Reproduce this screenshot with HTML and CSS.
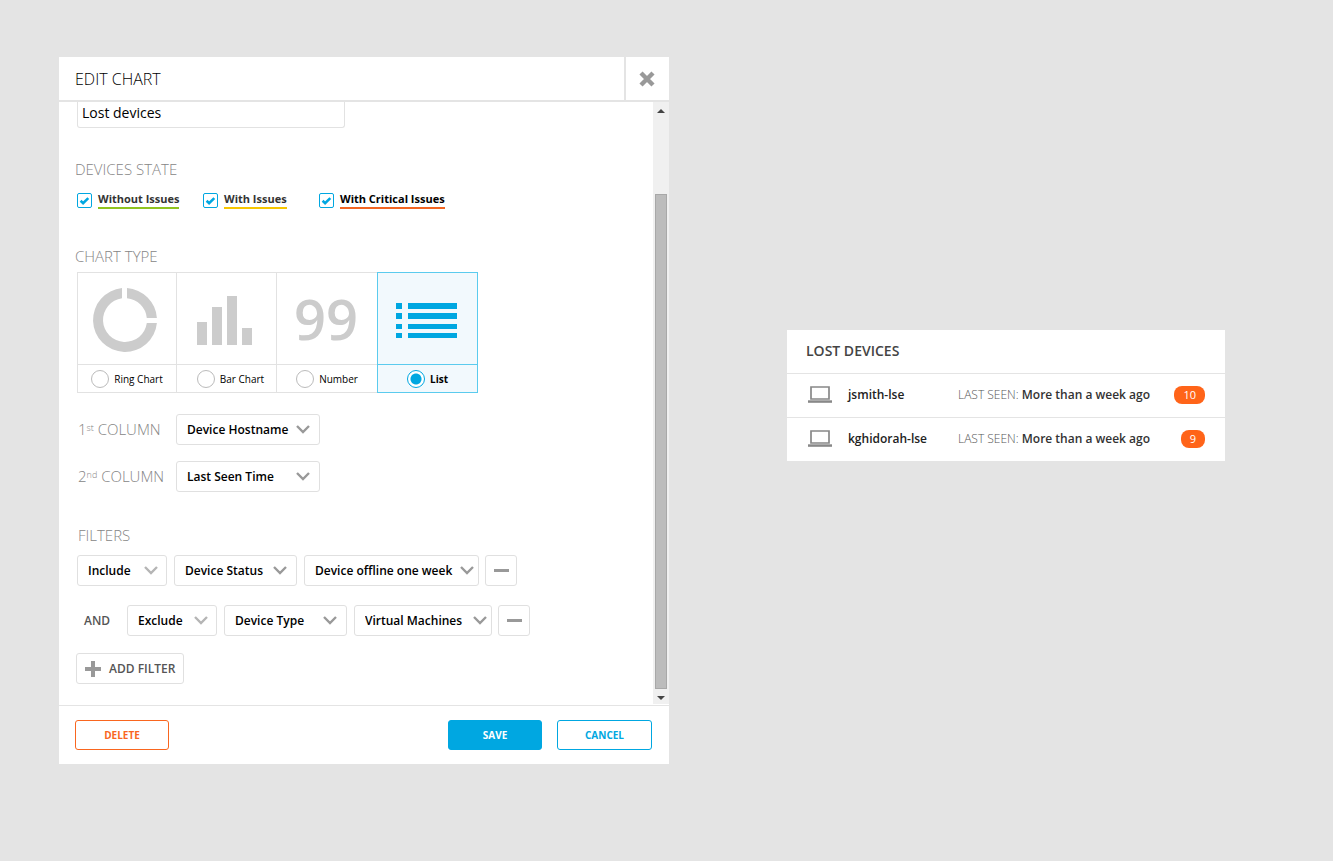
FILE: index.html
```html
<!DOCTYPE html>
<html lang="en">
<head>
<meta charset="utf-8">
<title>Edit Chart</title>
<meta name="viewport" content="width=device-width, initial-scale=1">
<link rel="stylesheet" href="styles.css">
</head>
<body>
<svg class="defs" aria-hidden="true">
  <symbol id="chevron" viewBox="0 0 14 9"><path d="M1 1l6 6 6-6" fill="none" stroke="currentColor" stroke-width="2.4"/></symbol>
  <symbol id="check" viewBox="0 0 15 15"><path d="M3.600 7.800l2.500 2.300 5.200-5" fill="none" stroke="currentColor" stroke-width="2.600"/></symbol>
  <symbol id="minus" viewBox="0 0 15 3"><path d="M0 0h15v3H0z" fill="currentColor"/></symbol>
  <symbol id="laptop" viewBox="0 0 24 17"><path d="M3 1h18v12H3z" fill="none" stroke="currentColor" stroke-width="1.700"/><path d="M0 14.300h24v2.500H0z" fill="currentColor"/></symbol>
</svg>
<main class="page">
  <section class="dialog" role="dialog" aria-labelledby="dialog-title">
    <header class="dialog-header">
      <h1 class="dialog-title" id="dialog-title">EDIT CHART</h1>
      <button class="close" type="button" aria-label="Close">
        <svg width="16" height="16" viewBox="0 0 16 16"><path d="M2 2l12 12M14 2L2 14" stroke="currentColor" stroke-width="4.400"/></svg>
      </button>
    </header>
    <div class="dialog-body">
      <form class="form" id="chart-form">
        <input class="name-input" type="text" value="Lost devices" aria-label="Chart name">

        <h2 class="section-title title-state">DEVICES STATE</h2>
        <div class="states">
          <label class="state"><span class="check"><input type="checkbox" checked><svg><use href="#check"/></svg></span><span class="state-name ok">Without Issues</span></label>
          <label class="state"><span class="check"><input type="checkbox" checked><svg><use href="#check"/></svg></span><span class="state-name warn">With Issues</span></label>
          <label class="state"><span class="check"><input type="checkbox" checked><svg><use href="#check"/></svg></span><span class="state-name critical">With Critical Issues</span></label>
        </div>

        <h2 class="section-title title-type">CHART TYPE</h2>
        <div class="tiles">
          <label class="tile tile-ring">
            <span class="tile-art"><svg width="66" height="66" viewBox="0 0 66 66">
              <path d="M30 1.100A32 32 0 1 0 64.900 36H54.800A22 22 0 1 1 30 11.200zM35 1.100V11.200A22 22 0 0 1 54.800 31H64.900A32 32 0 0 0 35 1.100z" fill="currentColor"/></svg></span>
            <span class="tile-choice"><input type="radio" name="type">Ring Chart</span>
          </label>
          <label class="tile tile-bars">
            <span class="tile-art"><svg width="55" height="50" viewBox="0 0 55 50"><path d="M0 27h10v23H0zM15 12h10v38H15zM30 1h10v49H30zM45 33h10v17H45z" fill="currentColor"/></svg></span>
            <span class="tile-choice"><input type="radio" name="type">Bar Chart</span>
          </label>
          <label class="tile tile-number">
            <span class="tile-art">99</span>
            <span class="tile-choice"><input type="radio" name="type">Number</span>
          </label>
          <label class="tile selected">
            <span class="tile-art"><svg width="61" height="35" viewBox="0 0 61 35"><path d="M0 0h6v6H0zM12 0h49v6H12zM0 10h6v6H0zM12 10h49v6H12zM0 21h6v5H0zM12 21h49v5H12zM0 30h6v5H0zM12 30h49v5H12z" fill="currentColor"/></svg></span>
            <span class="tile-choice"><input type="radio" name="type" checked>List</span>
          </label>
        </div>

        <div class="columns">
          <label class="column-label" for="col1">1<sup>st</sup> COLUMN</label>
          <span class="select w-144"><select id="col1"><option>Device Hostname</option></select><svg><use href="#chevron"/></svg></span>
          <label class="column-label" for="col2">2<sup>nd</sup> COLUMN</label>
          <span class="select w-144"><select id="col2"><option>Last Seen Time</option></select><svg><use href="#chevron"/></svg></span>
        </div>

        <h2 class="section-title title-filters">FILTERS</h2>
        <div class="filter">
          <span class="select w-90 pale"><select aria-label="Filter 1 mode"><option>Include</option></select><svg><use href="#chevron"/></svg></span>
          <span class="select w-123"><select aria-label="Filter 1 field"><option>Device Status</option></select><svg><use href="#chevron"/></svg></span>
          <span class="select w-175 tight"><select aria-label="Filter 1 value"><option>Device offline one week</option></select><svg><use href="#chevron"/></svg></span>
          <button class="remove" type="button" aria-label="Remove filter 1"><svg><use href="#minus"/></svg></button>
        </div>
        <div class="filter">
          <span class="joiner">AND</span>
          <span class="select w-90 pale"><select aria-label="Filter 2 mode"><option>Exclude</option></select><svg><use href="#chevron"/></svg></span>
          <span class="select w-123"><select aria-label="Filter 2 field"><option>Device Type</option></select><svg><use href="#chevron"/></svg></span>
          <span class="select w-138 tight"><select aria-label="Filter 2 value"><option>Virtual Machines</option></select><svg><use href="#chevron"/></svg></span>
          <button class="remove" type="button" aria-label="Remove filter 2"><svg><use href="#minus"/></svg></button>
        </div>
        <button class="add" type="button"><svg width="16" height="16" viewBox="0 0 16 16"><path d="M6 0h4v6h6v4h-6v6H6v-6H0V6h6z" fill="currentColor"/></svg>ADD FILTER</button>
      </form>
      <div class="scrollbar" aria-hidden="true">
        <svg width="8" height="4" viewBox="0 0 8 4"><path d="M4 0l4 4H0z" fill="currentColor"/></svg>
        <div class="track"><div class="thumb"></div></div>
        <svg width="8" height="4" viewBox="0 0 8 4"><path d="M4 4l4-4H0z" fill="currentColor"/></svg>
      </div>
    </div>
    <footer class="dialog-footer">
      <button class="btn btn-delete" type="button">DELETE</button>
      <button class="btn btn-save" type="submit" form="chart-form">SAVE</button>
      <button class="btn btn-cancel" type="button">CANCEL</button>
    </footer>
  </section>

  <section class="card" aria-labelledby="card-title">
    <h2 class="card-title" id="card-title">LOST DEVICES</h2>
    <ul class="devices">
      <li class="device"><svg><use href="#laptop"/></svg><span class="device-name">jsmith-lse</span><span class="seen">LAST SEEN: <strong>More than a week ago</strong></span><span class="badge">10</span></li>
      <li class="device"><svg><use href="#laptop"/></svg><span class="device-name">kghidorah-lse</span><span class="seen">LAST SEEN: <strong>More than a week ago</strong></span><span class="badge">9</span></li>
    </ul>
  </section>
</main>
</body>
</html>
```
FILE: styles.css
```css
* { box-sizing: border-box; }

body {
  margin: 0;
  background: #e4e4e4;
  color: #000;
  font-family: "Open Sans", "Noto Sans", sans-serif;
  font-size: 12px;
}

button, input, select { font: inherit; color: inherit; margin: 0; }
button { cursor: pointer; }
svg { display: block; flex: none; }
.defs { position: absolute; width: 0; height: 0; }

.page {
  display: grid;
  grid-template-columns: 610fr 438fr;
  gap: 118px;
  align-items: start;
  padding: 57px 108px 57px 59px;
}

/* Dialog */
.dialog { background: #fff; }

.dialog-header {
  display: flex;
  align-items: stretch;
  height: 45px;
  border-bottom: 2px solid #e4e4e4;
}
.dialog-title {
  flex: 1;
  margin: 0;
  padding-left: 16px;
  font-size: 16px;
  font-weight: 300;
  line-height: 44px;
}
.close {
  display: grid;
  place-items: center;
  width: 45px;
  padding: 0 1px 0 0;
  border: 0;
  border-left: 2px solid #e4e4e4;
  background: none;
  color: #999;
}

.dialog-body { display: flex; border-bottom: 1px solid #e4e4e4; }
.form { flex: 1; min-width: 0; padding: 0 0 21px 18px; }

.name-input {
  display: block;
  width: 268px;
  height: 26px;
  padding: 0 4px 4px;
  border: 1px solid #e2e2e2;
  border-top: 0;
  border-radius: 0 0 3px 3px;
  font-size: 14px;
}

.section-title {
  margin: 0;
  color: #858585;
  font-size: 15px;
  font-weight: 300;
  line-height: 20px;
}
.title-state { margin: 31px 0 12px -2px; }
.title-type { margin: 37px 0 6px -2px; }
.title-filters { margin: 33px 0 10px 1px; }

.states { display: grid; grid-template-columns: 126px 116px auto; justify-content: start; }
.state { display: flex; align-items: center; gap: 6px; }
.check { display: grid; color: #00a7e1; }
.check > * { grid-area: 1 / 1; width: 15px; height: 15px; }
.check input { appearance: none; border: 1px solid #00a7e1; border-radius: 2px; background: #fff; }
.check svg { pointer-events: none; }
.check input:not(:checked) + svg { visibility: hidden; }
.state-name { border-bottom: 2px solid; color: #333; font-size: 11px; font-weight: 700; line-height: 16px; }
.state-name.ok { border-color: #8fc31f; }
.state-name.warn { border-color: #f7c600; }
.state-name.critical { border-color: #f26522; color: #000; }

.tiles { display: flex; }
.tile { width: 101px; border: 1px solid #e2e2e2; }
.tile + .tile { margin-left: -1px; }
.tile-art { display: grid; place-items: center; height: 91px; padding: 2px 4px 0 0; color: #ccc; }
.tile-ring { width: 100px; }
.tile-number { width: 102px; }
.tile-number .tile-art { padding: 0 2px 0 0; font-size: 56px; font-weight: 600; line-height: 91px; }
.tile-choice {
  display: flex;
  align-items: center;
  justify-content: center;
  gap: 5px;
  height: 28px;
  border-top: 1px solid #e2e2e2;
  font-size: 10px;
}
.tile-bars .tile-choice { padding-left: 8px; }
.tile-choice input { appearance: none; width: 18px; height: 18px; border: 1px solid #bbb; border-radius: 50%; background: #fff; }
.selected { z-index: 1; background: #f2f9fd; }
.selected, .selected .tile-choice { border-color: #5bcbee; }
.selected .tile-art { padding: 4px 2px 0 0; color: #00a7e1; }
.selected .tile-choice { font-weight: 700; }
.tile-choice input:checked { border-color: #00a7e1; background: radial-gradient(circle, #00a7e1 5px, #fff 6px); }

.columns {
  display: grid;
  grid-template-columns: 91px auto;
  gap: 16px 8px;
  justify-content: start;
  align-items: center;
  margin-top: 21px;
  white-space: nowrap;
}
.column-label { padding: 0 0 2px 1px; color: #858585; font-size: 15px; font-weight: 300; line-height: 20px; }
.column-label sup { font-size: 9px; line-height: 0; vertical-align: 4px; }

.select { display: grid; align-items: center; height: 31px; color: #999; }
.select > * { grid-area: 1 / 1; }
.select select {
  appearance: none;
  width: 100%;
  height: 31px;
  padding: 0 0 1px 10px;
  border: 1px solid #e0e0e0;
  border-radius: 3px;
  background: #fff;
  color: #000;
  font-weight: 600;
}
.select svg { justify-self: end; width: 14px; height: 9px; margin-right: 10px; pointer-events: none; }
.pale svg { margin-right: 9px; color: #b5b5b5; }
.tight svg { margin-right: 5px; }
.w-90 { width: 90px; }
.w-123 { width: 123px; }
.w-138 { width: 138px; }
.w-144 { width: 144px; }
.w-175 { width: 175px; }

.filter { display: flex; align-items: center; gap: 7px; }
.filter + .filter { margin-top: 19px; }
.joiner { width: 43px; padding-left: 7px; color: #555; font-weight: 600; }
.remove, .add { height: 31px; padding: 0; border: 1px solid #e0e0e0; border-radius: 3px; background: #fff; }
.remove { display: grid; place-items: center; width: 32px; margin-left: -1px; color: #999; }
.remove svg { width: 15px; height: 3px; }
.add {
  display: flex;
  align-items: center;
  gap: 8px;
  margin: 17px 0 0 -1px;
  padding: 0 8px;
  color: #555;
  font-weight: 600;
}
.add svg { color: #999; }

.scrollbar {
  display: flex;
  flex-direction: column;
  align-items: center;
  gap: 7px;
  width: 16px;
  margin-bottom: 1px;
  padding: 7px 0 4px;
  background: #f0f0f0;
  color: #444;
}
.track { display: flex; flex: 1; flex-direction: column; justify-content: flex-end; }
.thumb { width: 12px; height: 87%; border: 1px solid #a8a8a8; background: #bcbcbc; }

.dialog-footer { display: flex; gap: 15px; padding: 14px 17px 14px 16px; }
.btn { width: 94px; height: 30px; padding: 0; border: 1px solid; border-radius: 3px; background: #fff; font-size: 10px; font-weight: 700; }
.btn-delete { margin-right: auto; color: #f9661f; }
.btn-save { border-color: #00a7e1; background: #00a7e1; color: #fff; }
.btn-cancel { width: 95px; color: #00a7e1; }

/* Lost devices card */
.card { margin-top: 273px; background: #fff; }
.card-title { margin: 0; padding: 0 0 2px 19px; color: #444; font-size: 14px; font-weight: 600; line-height: 41px; }
.devices { margin: 0; padding: 0; list-style: none; }
.device {
  display: grid;
  grid-template-columns: 24px 94px 1fr auto;
  gap: 16px;
  align-items: center;
  height: 44px;
  padding: 0 20px 2px 21px;
  border-top: 1px solid #e4e4e4;
  white-space: nowrap;
}
.device svg { width: 24px; height: 17px; color: #888; }
.device-name { color: #222; font-weight: 600; }
.seen { color: #555; font-weight: 300; }
.seen strong { color: #333; font-weight: 600; }
.badge { padding: 0 9px; border-radius: 8px; background: #ff6419; color: #fff; font-size: 11px; line-height: 18px; }
```
